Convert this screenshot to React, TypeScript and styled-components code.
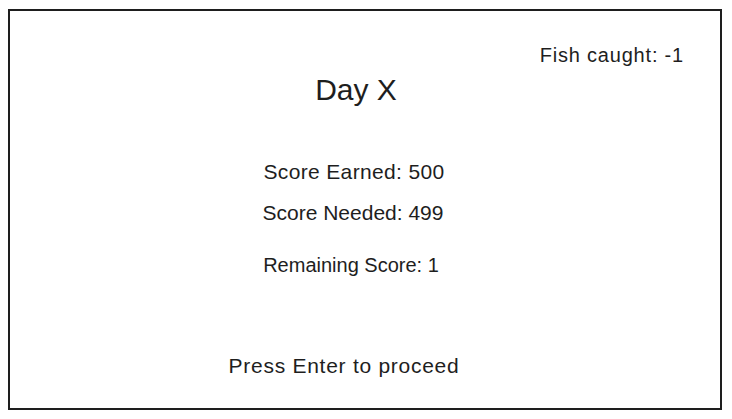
import React from "react";
import styled, { createGlobalStyle } from "styled-components";

const Global = createGlobalStyle`
  html, body { margin: 0; padding: 0; background: #ffffff; }
  body { font-family: "Liberation Sans", Arial, sans-serif; color: #1e1e1e; }
`;

const Frame = styled.div`
  box-sizing: border-box;
  margin: 9px 10px 0 8px;
  width: 714px;
  height: 401px;
  border: 2px solid #1e1e1e;
  background: #ffffff;
  display: flex;
  flex-direction: column;
`;

const TopBar = styled.div`
  display: flex;
  justify-content: flex-end;
  padding: 34px 36px 0 0;
`;

const Counter = styled.div`
  font-size: 20px;
  line-height: 1;
  letter-spacing: 0.8px;
  white-space: nowrap;
`;

const Body = styled.div`
  display: flex;
  flex-direction: column;
  align-items: center;
  padding-right: 22px;
`;

const Title = styled.div`
  font-size: 30px;
  line-height: 1;
  margin-top: 10px;
  margin-left: 4px;
`;

const Line = styled.div<{ $gap: number; $shift?: number; $ls?: number; $size?: number }>`
  font-size: ${(p) => p.$size ?? 21}px;
  line-height: 1;
  white-space: nowrap;
  letter-spacing: ${(p) => p.$ls ?? 0}px;
  margin-top: ${(p) => p.$gap}px;
  margin-right: ${(p) => (p.$shift ?? 0) * 2}px;
`;

export default function App() {
  return (
    <>
      <Global />
      <Frame>
        <TopBar>
          <Counter>Fish caught: -1</Counter>
        </TopBar>
        <Body>
          <Title>Day X</Title>
          <Line $gap={56} $ls={0.35}>Score Earned: 500</Line>
          <Line $gap={20} $shift={1}>Score Needed: 499</Line>
          <Line $gap={32} $shift={3} $size={20}>Remaining Score: 1</Line>
          <Line $gap={80} $shift={10} $ls={0.73}>Press Enter to proceed</Line>
        </Body>
      </Frame>
    </>
  );
}
